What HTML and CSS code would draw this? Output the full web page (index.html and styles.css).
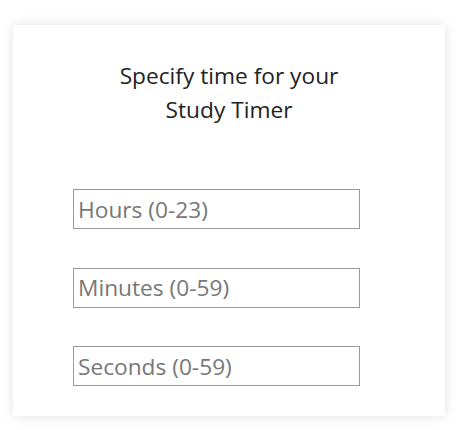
FILE: index.html
```html
<!DOCTYPE html>
<html>
<head>
<meta charset="utf-8">
<link rel="stylesheet" href="styles.css">
</head>
<body>
<div class="card">
  <h1 class="title">Specify time for your<br>Study Timer</h1>
  <div class="fields">
    <input class="field" type="text" placeholder="Hours (0-23)">
    <input class="field" type="text" placeholder="Minutes (0-59)">
    <input class="field" type="text" placeholder="Seconds (0-59)">
  </div>
</div>
</body>
</html>
```
FILE: styles.css
```css
html, body {
  margin: 0;
  background: #ffffff;
}
body {
  padding: 25px 12px 14px 13px;
  font-family: "Open Sans", "Noto Sans", sans-serif;
}
.card {
  width: 432px;
  box-sizing: border-box;
  background: #ffffff;
  box-shadow: 0 0 12px rgba(0, 0, 0, 0.12);
  padding: 34px 0 30px 60px;
}
.title {
  margin: 0 0 0 -60px;
  width: 432px;
  text-align: center;
  font-weight: 400;
  font-size: 22.7px;
  line-height: 34px;
  color: #222222;
}
.fields {
  margin-top: 62px;
  display: flex;
  flex-direction: column;
  gap: 38.5px;
}
.field {
  display: block;
  width: 287px;
  height: 40px;
  box-sizing: border-box;
  border: 1px solid #999999;
  padding: 0 4px;
  margin: 0;
  font-family: "Open Sans", "Noto Sans", sans-serif;
  font-size: 22.7px;
  color: #222;
  outline: none;
}
.field::placeholder {
  color: #777777;
}
```
